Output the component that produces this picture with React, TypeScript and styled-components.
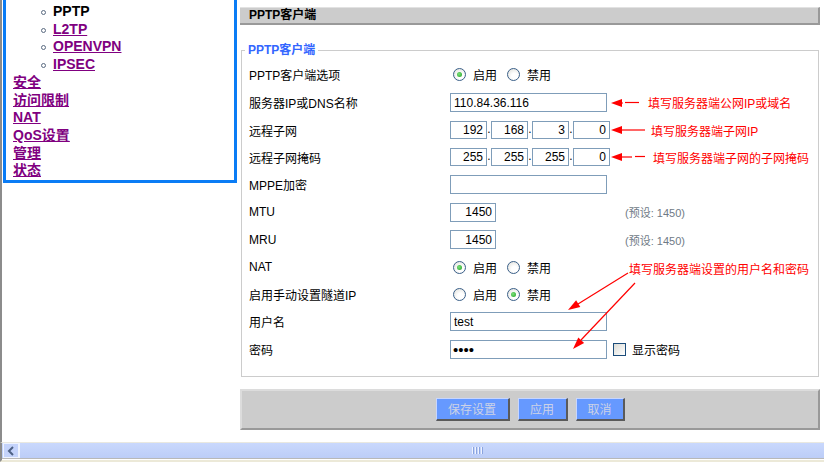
import React from "react";
import styled, { createGlobalStyle } from "styled-components";

const GlobalStyle = createGlobalStyle`
  html, body {
    margin: 0;
    padding: 0;
    background: #fff;
  }
  body {
    font-family: "Liberation Sans", "Noto Sans CJK SC", sans-serif;
    font-size: 12px;
    color: #000;
  }
`;

const navMain = ["安全", "访问限制", "NAT", "QoS设置", "管理", "状态"];
const navSub = ["PPTP", "L2TP", "OPENVPN", "IPSEC"];

const Arrow = ({ tail, gap = 0, dash = 0 }: { tail: number; gap?: number; dash?: number }) => {
  const w = tail + gap + dash;
  return (
    <ArrowSvg width={w} height={12} viewBox={`0 0 ${w} 12`}>
      <polygon points="0,6 11,2 11,10" fill="#ff0000" />
      <line x1="10" y1="6" x2={tail} y2="6" stroke="#ff0000" strokeWidth="1.2" />
      {dash > 0 && (
        <line x1={tail + gap} y1="5.5" x2={w} y2="5.5" stroke="#ff0000" strokeWidth="1.2" />
      )}
    </ArrowSvg>
  );
};

const App: React.FC = () => {
  return (
    <Page>
      <GlobalStyle />
      <Main>
        <Side>
          <NavBox>
            <SubList>
              {navSub.map((s, i) => (
                <SubItem key={s}>
                  <NavLink current={i === 0}>{s}</NavLink>
                </SubItem>
              ))}
            </SubList>
            {navMain.map((m) => (
              <NavRow key={m}>
                <NavLink>{m}</NavLink>
              </NavRow>
            ))}
          </NavBox>
        </Side>

        <Content>
          <TitleBar>PPTP客户端</TitleBar>
          <Box>
            <Legend>PPTP客户端</Legend>
            <Rows>
              <Row first>
                <Label>PPTP客户端选项</Label>
                <Field>
                  <Radio checked />
                  <RadioText>启用</RadioText>
                  <Radio />
                  <RadioText>禁用</RadioText>
                </Field>
              </Row>
              <Row>
                <Label>服务器IP或DNS名称</Label>
                <Field>
                  <TextInput readOnly value="110.84.36.116" />
                  <Gap w={4} />
                  <Arrow tail={12} gap={2} dash={14} />
                  <Gap w={9} />
                  <Note>填写服务器端公网IP或域名</Note>
                </Field>
              </Row>
              <Row>
                <Label>远程子网</Label>
                <Field>
                  <IpBox readOnly value="192" />
                  <Dot>.</Dot>
                  <IpBox readOnly value="168" />
                  <Dot>.</Dot>
                  <IpBox readOnly value="3" />
                  <Dot>.</Dot>
                  <IpBox readOnly value="0" />
                  <Gap w={1} />
                  <Arrow tail={34} />
                  <Gap w={6} />
                  <Note>填写服务器端子网IP</Note>
                </Field>
              </Row>
              <Row>
                <Label>远程子网掩码</Label>
                <Field>
                  <IpBox readOnly value="255" />
                  <Dot>.</Dot>
                  <IpBox readOnly value="255" />
                  <Dot>.</Dot>
                  <IpBox readOnly value="255" />
                  <Dot>.</Dot>
                  <IpBox readOnly value="0" />
                  <Gap w={1} />
                  <Arrow tail={21} gap={3} dash={10} />
                  <Gap w={8} />
                  <Note>填写服务器端子网的子网掩码</Note>
                </Field>
              </Row>
              <Row>
                <Label>MPPE加密</Label>
                <Field>
                  <TextInput readOnly value="" />
                </Field>
              </Row>
              <Row>
                <Label>MTU</Label>
                <Field>
                  <NumInput readOnly value="1450" />
                  <Hint>(预设: 1450)</Hint>
                </Field>
              </Row>
              <Row>
                <Label>MRU</Label>
                <Field>
                  <NumInput readOnly value="1450" />
                  <Hint>(预设: 1450)</Hint>
                </Field>
              </Row>
              <Row>
                <Label>NAT</Label>
                <Field>
                  <Radio checked />
                  <RadioText>启用</RadioText>
                  <Radio />
                  <RadioText>禁用</RadioText>
                </Field>
              </Row>
              <Row>
                <Label>启用手动设置隧道IP</Label>
                <Field>
                  <Radio />
                  <RadioText>启用</RadioText>
                  <Radio checked />
                  <RadioText>禁用</RadioText>
                </Field>
              </Row>
              <Row>
                <Label>用户名</Label>
                <Field>
                  <TextInput readOnly value="test" />
                </Field>
              </Row>
              <Row>
                <Label>密码</Label>
                <Field>
                  <PassInput type="password" readOnly value="test" />
                  <CheckBox />
                  <CheckText>显示密码</CheckText>
                </Field>
              </Row>
            </Rows>
          </Box>

          <ButtonBar>
            <Button w={74}>保存设置</Button>
            <Button w={50}>应用</Button>
            <Button w={49}>取消</Button>
          </ButtonBar>
        </Content>
      </Main>

      <ScrollBar>
        <Track>
          <ScrollBtn>
            <svg width="9" height="10" viewBox="0 0 9 10">
              <path d="M6 1 L2 5 L6 9" fill="none" stroke="#4d6185" strokeWidth="2" />
            </svg>
          </ScrollBtn>
          <Thumb>
            <Grip />
            <Grip />
            <Grip />
            <Grip />
          </Thumb>
        </Track>
      </ScrollBar>

      <OverlayNote>填写服务器端设置的用户名和密码</OverlayNote>
      <Overlay width={824} height={462} viewBox="0 0 824 462">
        <g stroke="#ff0000" strokeWidth="1.2" fill="none">
          <line x1="628" y1="273" x2="578" y2="304" />
          <line x1="635" y1="283" x2="581" y2="340" />
        </g>
        <g fill="#ff0000">
          <polygon points="568,310 580.3,307.1 576.1,300.3" />
          <polygon points="573,349 584.1,343 578.3,337.6" />
        </g>
      </Overlay>
    </Page>
  );
};

export default App;

const Page = styled.div`
  position: relative;
  width: 824px;
  height: 462px;
  overflow: hidden;
  display: flex;
  flex-direction: column;
  background: #fff;
`;

const Main = styled.div`
  display: flex;
  height: 442px;
  border-left: 2px solid #8c8c8c;
`;

const Side = styled.div`
  width: 238px;
  flex: none;
`;

const NavBox = styled.div`
  margin-left: 1px;
  width: 221px;
  border: 3px solid #0a7cf5;
  border-top: none;
  padding: 3px 0 0 7px;
  font: bold 14px/17.7px "Liberation Sans", "Noto Sans CJK SC", sans-serif;
`;

const SubList = styled.ul`
  list-style: none;
  margin: 0;
  padding: 0 0 0 40px;
`;

const SubItem = styled.li`
  position: relative;
  &::before {
    content: "";
    position: absolute;
    left: -12px;
    top: 7px;
    width: 3px;
    height: 3px;
    border: 1px solid #5a6a80;
    border-radius: 50%;
  }
`;

const NavRow = styled.div``;

const NavLink = styled.span<{ current?: boolean }>`
  color: ${(p) => (p.current ? "#000" : "#800080")};
  text-decoration: ${(p) => (p.current ? "none" : "underline")};
  cursor: pointer;
`;

const Content = styled.div`
  width: 580px;
  padding-top: 7px;
`;

const TitleBar = styled.div`
  height: 15px;
  line-height: 15px;
  padding-left: 9px;
  background: #cccccc;
  border-top: 1px solid #e2e2e2;
  border-bottom: 2px solid #999;
  border-right: 2px solid #999;
  font-weight: bold;
  font-size: 12px;
`;

const Box = styled.fieldset`
  margin: 18px 1px 0 1px;
  padding: 0 0 13px 7px;
  border: 1px solid #cccccc;
  min-width: 0;
`;

const Legend = styled.legend`
  margin-left: -4px;
  padding: 0 3px;
  color: #3366ff;
  font-weight: bold;
  font-size: 12px;
  line-height: 14px;
`;

const Rows = styled.div`
  padding-top: 3px;
`;

const Row = styled.div<{ first?: boolean }>`
  display: grid;
  grid-template-columns: 201px 1fr;
  align-items: center;
  height: ${(p) => (p.first ? "29px" : "27.4px")};
`;

const Label = styled.div`
  font-size: 12px;
  white-space: nowrap;
`;

const Field = styled.div`
  display: flex;
  align-items: center;
  white-space: nowrap;
`;

const Gap = styled.span<{ w: number }>`
  display: inline-block;
  width: ${(p) => p.w}px;
  flex: none;
`;

const inputBase = `
  box-sizing: border-box;
  height: 19px;
  border: 1px solid #7f9db9;
  font-family: "Liberation Sans", "Noto Sans CJK SC", sans-serif;
  font-size: 12px;
  color: #000;
  background: #fff;
  outline: none;
  margin: 0;
`;

const TextInput = styled.input`
  ${inputBase}
  width: 157px;
  padding: 0 3px;
`;

const PassInput = styled(TextInput)`
  font-size: 15px;
  letter-spacing: 0;
  padding: 0 2px;
`;

const IpBox = styled.input`
  ${inputBase}
  width: 37px;
  height: 18px;
  padding: 0 3px;
  text-align: right;
`;

const NumInput = styled.input`
  ${inputBase}
  width: 46px;
  padding: 0 3px;
  text-align: right;
`;

const Dot = styled.span`
  width: 4px;
  text-align: center;
  align-self: flex-end;
  font-size: 12px;
  line-height: 14px;
  margin-bottom: 3px;
`;

const Hint = styled.span`
  margin-left: 129px;
  color: #6f7a86;
  font-size: 11px;
`;

const Radio = styled.span<{ checked?: boolean }>`
  box-sizing: border-box;
  width: 13px;
  height: 13px;
  margin-left: 3px;
  border-radius: 50%;
  border: 1px solid #3a5f88;
  background: radial-gradient(circle at 60% 65%, #ffffff 30%, #dcdcd6 100%);
  position: relative;
  flex: none;
  &::after {
    content: "";
    display: ${(p) => (p.checked ? "block" : "none")};
    position: absolute;
    left: 3px;
    top: 3px;
    width: 5px;
    height: 5px;
    border-radius: 50%;
    background: radial-gradient(circle at 40% 40%, #7be07b, #21a121);
  }
`;

const RadioText = styled.span`
  margin-left: 7px;
  margin-right: 7px;
  font-size: 12px;
`;

const CheckBox = styled.span`
  box-sizing: border-box;
  width: 13px;
  height: 13px;
  margin-left: 6px;
  border: 1px solid #1c4c7a;
  background: linear-gradient(135deg, #dcdcd6, #ffffff);
  flex: none;
`;

const CheckText = styled.span`
  margin-left: 6px;
  font-size: 12px;
`;

const ArrowSvg = styled.svg`
  display: block;
  flex: none;
`;

const Note = styled.span`
  color: #ff0000;
  font-size: 12px;
`;

const ButtonBar = styled.div`
  margin-top: 12px;
  height: 37px;
  display: flex;
  align-items: center;
  justify-content: center;
  gap: 8px;
  background: #cccccc;
  border-top: 2px solid #dcdcdc;
  border-left: 2px solid #dcdcdc;
  border-bottom: 2px solid #999;
  border-right: 2px solid #999;
`;

const Button = styled.button<{ w: number }>`
  box-sizing: border-box;
  width: ${(p) => p.w}px;
  height: 23px;
  padding: 0;
  background: #6699ff;
  color: #ccd2e6;
  font-family: "Liberation Sans", "Noto Sans CJK SC", sans-serif;
  font-size: 12px;
  border-style: solid;
  border-width: 1px 2px 2px 1px;
  border-color: #c7d6ff #5a5a5a #5a5a5a #c7d6ff;
  cursor: pointer;
`;

const ScrollBar = styled.div`
  height: 20px;
  box-sizing: border-box;
  border-left: 2px solid #8c8c8c;
  border-top: 1px solid #e9e8e0;
  border-bottom: 2px solid #ece9d8;
  background: #fff;
`;

const Track = styled.div`
  height: 15px;
  display: flex;
  border-bottom: 1px solid #b8b8b8;
  background: linear-gradient(#c9d8fd, #bccdf7);
`;

const ScrollBtn = styled.div`
  box-sizing: border-box;
  width: 16px;
  margin-left: 1px;
  display: flex;
  align-items: center;
  justify-content: center;
  border: 1px solid #eef3ff;
  background: #c4d3fb;
`;

const Thumb = styled.div`
  flex: 1;
  display: flex;
  align-items: center;
  justify-content: center;
  gap: 1px;
  border-left: 1px solid #eef3ff;
  padding-left: 110px;
`;

const Grip = styled.span`
  width: 1px;
  height: 7px;
  background: #eef2fe;
  border-right: 1px solid #8aa4e0;
`;

const OverlayNote = styled.span`
  position: absolute;
  left: 629px;
  top: 263px;
  color: #ff0000;
  font-size: 12px;
  line-height: 14px;
  background: #fff;
`;

const Overlay = styled.svg`
  position: absolute;
  left: 0;
  top: 0;
  pointer-events: none;
`;
